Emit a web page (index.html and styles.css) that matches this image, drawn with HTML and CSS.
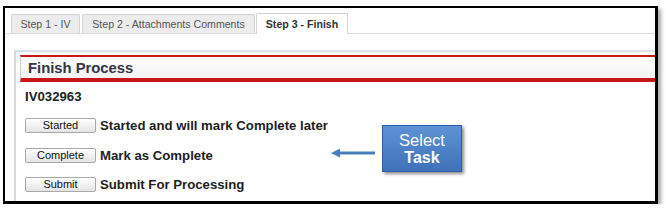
FILE: index.html
```html
<!DOCTYPE html>
<html>
<head>
<meta charset="utf-8">
<link rel="stylesheet" href="styles.css">
</head>
<body>
<div class="frame">
  <div class="tabs">
    <div class="tab">Step 1 - IV</div>
    <div class="tab">Step 2 - Attachments Comments</div>
    <div class="tab active">Step 3 - Finish</div>
  </div>
  <div class="panel">
    <div class="header">Finish Process</div>
    <div class="content">
      <div class="id">IV032963</div>
      <div class="row"><button class="btn">Started</button><span class="label">Started and will mark Complete later</span></div>
      <div class="row"><button class="btn">Complete</button><span class="label">Mark as Complete</span></div>
      <div class="row"><button class="btn">Submit</button><span class="label">Submit For Processing</span></div>
    </div>
  </div>
  <svg class="arrow" width="48" height="12" viewBox="0 0 48 12">
    <path d="M1 6 L10 1.5 L10 4.5 L45 4.5 L45 7.5 L10 7.5 L10 10.5 Z" fill="#4a7ebb"/>
  </svg>
  <div class="callout">
    <span class="c1">Select</span>
    <span class="c2">Task</span>
  </div>
</div>
</body>
</html>
```

FILE: styles.css
```css
html, body {
  margin: 0;
  padding: 0;
  background: #ffffff;
}
body {
  font-family: "Liberation Sans", Arial, sans-serif;
}
.frame {
  position: relative;
  margin: 6px 0 0 3px;
  width: 650px;
  height: 193px;
  border-top: 2px solid #000;
  border-left: 2px solid #000;
  border-right: 3px solid #000;
  border-bottom: 3px solid #000;
  box-shadow: 3px 3px 4px rgba(0, 0, 0, 0.35);
  background: #fff;
  overflow: hidden;
}
.tabs {
  display: flex;
  margin-top: 5px;
  padding-left: 6px;
  border-bottom: 1px solid #dcdcdc;
  height: 20px;
}
.tab {
  flex: none;
  height: 19px;
  margin-top: 1px;
  margin-right: 2px;
  padding: 0;
  background: #ececec;
  border: 1px solid #d3d3d3;
  border-bottom: none;
  border-radius: 2px 2px 0 0;
  font-size: 10.6px;
  color: #555;
  display: flex;
  align-items: center;
  justify-content: center;
  white-space: nowrap;
  box-sizing: border-box;
  width: 69px;
}
.tab:nth-child(2) {
  width: 173px;
}
.tab.active {
  width: 92px;
  margin-right: 0;
  margin-left: -1px;
  background: #fff;
  color: #333;
  font-weight: bold;
  height: 21px;
  margin-top: 0;
  margin-bottom: -1px;
}
.panel {
  margin: 16px 0 0 9px;
  border-left: 2px solid #dadada;
  border-top: 2px solid #dbe2e8;
  height: 200px;
}
.header {
  margin: 3px 0 0 4px;
  border-top: 2px solid #c8161d;
  border-bottom: 4px solid #c8161d;
  border-left: 1px solid #d0d0d0;
  height: 21px;
  padding-left: 7px;
  background: linear-gradient(#ffffff, #f2f2f2);
  font-size: 14.8px;
  font-weight: bold;
  color: #353545;
  display: flex;
  align-items: center;
}
.content {
  padding: 7px 0 0 9px;
  display: flex;
  flex-direction: column;
}
.id {
  font-size: 13.2px;
  font-weight: bold;
  color: #222;
  height: 16px;
  line-height: 16px;
  margin-bottom: 6px;
}
.row {
  height: 29.5px;
  display: flex;
  align-items: center;
}
.btn {
  width: 71px;
  height: 15px;
  padding: 0;
  margin: 0 4px 0 0;
  border: 1px solid #a9a9a9;
  border-radius: 2px;
  background: linear-gradient(#ffffff, #e4e4e4);
  font-family: "Liberation Sans", Arial, sans-serif;
  font-size: 11px;
  color: #111;
  line-height: 13px;
}
.label {
  font-size: 13.2px;
  font-weight: bold;
  color: #1e1e1e;
}
.arrow {
  position: absolute;
  left: 325px;
  top: 139px;
}
.callout {
  position: absolute;
  left: 377px;
  top: 117px;
  width: 80px;
  height: 47px;
  box-sizing: border-box;
  border: 1px solid #2f5f9e;
  background: linear-gradient(#5d93d6, #3f72b8);
  box-shadow: 2px 2px 3px rgba(0, 0, 0, 0.45);
  display: flex;
  flex-direction: column;
  align-items: center;
  justify-content: center;
  color: #fff;
  line-height: 17px;
}
.c1 {
  font-size: 16.5px;
}
.c2 {
  font-size: 16px;
  font-weight: bold;
}
```
